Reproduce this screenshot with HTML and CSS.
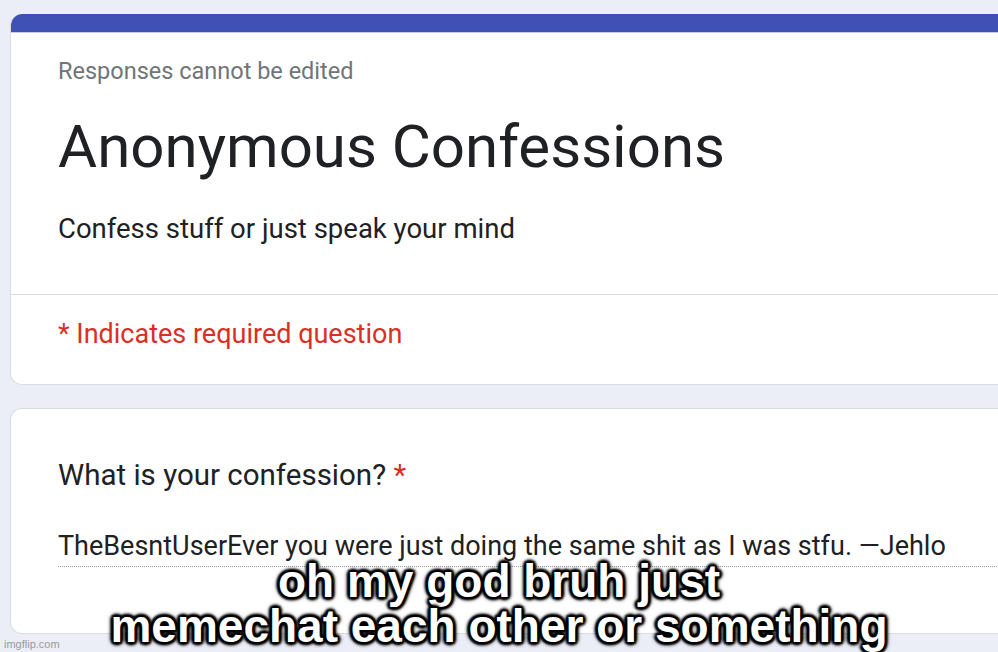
FILE: index.html
```html
<!DOCTYPE html>
<html>
<head>
<meta charset="utf-8">
<link rel="stylesheet" href="styles.css">
</head>
<body>
<div class="page">
  <div class="card header-card">
    <div class="bar"></div>
    <div class="header-top">
      <div class="note">Responses cannot be edited</div>
      <h1 class="title">Anonymous Confessions</h1>
      <div class="desc">Confess stuff or just speak your mind</div>
    </div>
    <div class="required">* Indicates required question</div>
  </div>
  <div class="card question-card">
    <div class="question">What is your confession? <span class="star">*</span></div>
    <div class="answer">TheBesntUserEver you were just doing the same shit as I was stfu. —Jehlo</div>
  </div>
</div>
<div class="caption">oh my god bruh just<br>memechat each other or something</div>
<div class="watermark">imgflip.com</div>
</body>
</html>
```
FILE: styles.css
```css
html, body {
  margin: 0;
  padding: 0;
}
body {
  width: 998px;
  height: 652px;
  overflow: hidden;
  background: #eceef7;
  font-family: Roboto, "Liberation Sans", sans-serif;
  position: relative;
}
.page {
  padding: 14px 0 0 10px;
  display: flex;
  flex-direction: column;
  gap: 23px;
}
.card {
  background: #fff;
  border: 1px solid #dadce0;
  border-right: none;
  border-radius: 12px 0 0 12px;
  width: 1000px;
  overflow: hidden;
}
.header-card {
  border-top: none;
  height: 370px;
}
.bar {
  height: 19px;
  background: #3f51b5;
  border-bottom: 1px solid #c5cae9;
  box-sizing: border-box;
}
.header-top {
  padding: 24px 0 0 47px;
  height: 262px;
  box-sizing: border-box;
  border-bottom: 1px solid #dadce0;
}
.note {
  font-size: 23.5px;
  color: #70757a;
  line-height: 28px;
}
.title {
  margin: 27px 0 0;
  font-weight: 400;
  font-size: 60px;
  line-height: 70px;
  color: #202124;
}
.desc {
  margin-top: 31px;
  font-size: 27.5px;
  color: #202124;
  line-height: 32px;
}
.required {
  padding: 23px 0 0 47px;
  font-size: 27px;
  color: #d93025;
  line-height: 32px;
}
.question-card {
  height: 226px;
  padding: 48px 0 0 47px;
  box-sizing: border-box;
}
.question {
  font-size: 29.5px;
  color: #202124;
  line-height: 36px;
}
.star {
  color: #d93025;
}
.answer {
  margin-top: 38px;
  padding-bottom: 5px;
  font-size: 27px;
  color: #202124;
  line-height: 30px;
  width: 941px;
  border-bottom: 1px dotted #9aa0a6;
  white-space: nowrap;
}
.caption {
  position: absolute;
  left: 0;
  right: 0;
  top: 559px;
  text-align: center;
  font-family: "Liberation Sans", Arial, sans-serif;
  font-weight: 700;
  font-size: 46px;
  line-height: 45px;
  color: #fff;
  text-shadow:
    2px 2px 2px #000, -2px -2px 2px #000, 2px -2px 2px #000, -2px 2px 2px #000,
    0 3px 3px #000, 0 -3px 3px #000, 3px 0 3px #000, -3px 0 3px #000,
    0 0 6px #000;
}
.watermark {
  position: absolute;
  left: 4px;
  bottom: 2px;
  font-family: "Liberation Sans", Arial, sans-serif;
  font-size: 11px;
  color: #9a9a9a;
}
```
